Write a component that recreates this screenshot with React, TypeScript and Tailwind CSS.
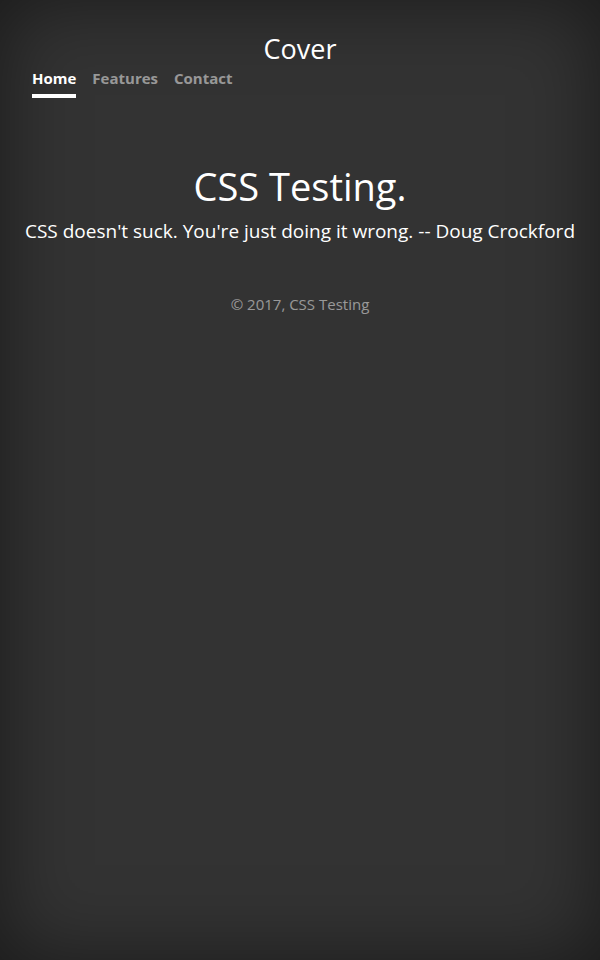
export default function App() {
  const links = [
    { label: "Home", active: true },
    { label: "Features", active: false },
    { label: "Contact", active: false },
  ]

  return (
    <div
      className="min-h-[960px] bg-[#333] text-white shadow-[inset_0_0_5rem_rgba(0,0,0,0.5)]"
      style={{ fontFamily: '"Open Sans", "Noto Sans", sans-serif' }}
    >
      <header className="px-8 pt-[30px]">
        <h3 className="text-center text-[27px] leading-[38px]">Cover</h3>
        <nav className="-mt-[1px] flex gap-4">
          {links.map((link) => (
            <a
              key={link.label}
              href="#"
              className={
                "border-b-4 pb-[5px] text-[15px] font-bold leading-[22px] " +
                (link.active ? "border-white text-white" : "border-transparent text-white/50")
              }
            >
              {link.label}
            </a>
          ))}
        </nav>
      </header>

      <main className="mt-[63px] text-center">
        <h1 className="text-[38px] leading-[50px]">CSS Testing.</h1>
        <p className="mt-[5px] text-[19px] leading-[30px]">
          CSS doesn't suck. You're just doing it wrong. -- Doug Crockford
        </p>
      </main>

      <footer className="mt-[47px] text-center text-[15px] text-white/50">
        <p>© 2017, CSS Testing</p>
      </footer>
    </div>
  )
}
